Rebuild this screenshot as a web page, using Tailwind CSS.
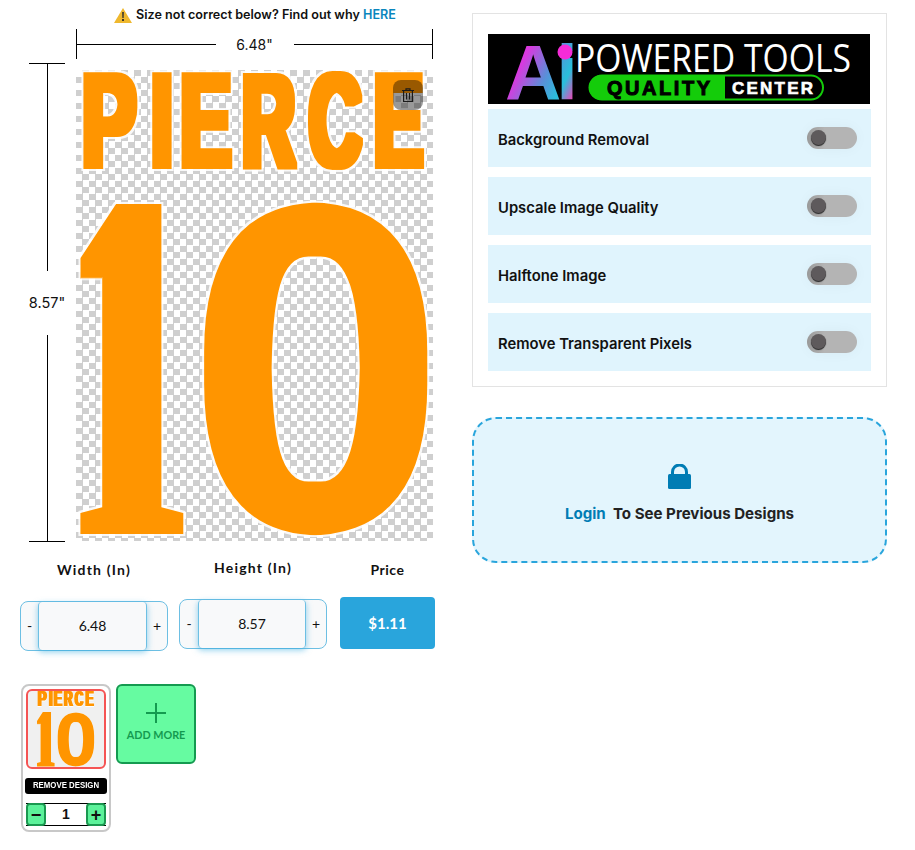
<!DOCTYPE html>
<html lang="en">
<head>
<meta charset="utf-8">
<title>Design sizing</title>
<script src="https://cdn.jsdelivr.net/npm/@tailwindcss/browser@4"></script>
</head>
<body class="bg-white font-['Inter',sans-serif] text-[#111]">
<svg width="0" height="0" class="absolute">
  <defs>
    <filter id="thick" x="-5%" y="-5%" width="110%" height="110%" color-interpolation-filters="sRGB">
      <feMorphology in="SourceAlpha" operator="dilate" radius="4 3" result="core"/>
      <feMorphology in="SourceAlpha" operator="dilate" radius="5.5 4.5" result="halo"/>
      <feFlood flood-color="#ffffff" flood-opacity="0.85"/><feComposite in2="halo" operator="in" result="w"/>
      <feFlood flood-color="#ff9500"/><feComposite in2="core" operator="in" result="o"/>
      <feMerge><feMergeNode in="w"/><feMergeNode in="o"/></feMerge>
    </filter>
    <filter id="one" x="-30%" y="-5%" width="160%" height="110%" color-interpolation-filters="sRGB">
      <feMorphology in="SourceAlpha" operator="dilate" radius="16 0" result="core"/>
      <feMorphology in="SourceAlpha" operator="dilate" radius="17.5 1.5" result="halo"/>
      <feFlood flood-color="#ffffff" flood-opacity="0.85"/><feComposite in2="halo" operator="in" result="w"/>
      <feFlood flood-color="#ff9500"/><feComposite in2="core" operator="in" result="o"/>
      <feMerge><feMergeNode in="w"/><feMergeNode in="o"/></feMerge>
    </filter>
    <filter id="zero" x="-5%" y="-10%" width="110%" height="120%" color-interpolation-filters="sRGB">
      <feMorphology in="SourceAlpha" operator="erode" radius="6 0" result="thin"/>
      <feMorphology in="thin" operator="dilate" radius="0 16" result="core"/>
      <feMorphology in="thin" operator="dilate" radius="1.5 17.5" result="halo"/>
      <feFlood flood-color="#ffffff" flood-opacity="0.85"/><feComposite in2="halo" operator="in" result="w"/>
      <feFlood flood-color="#ff9500"/><feComposite in2="core" operator="in" result="o"/>
      <feMerge><feMergeNode in="w"/><feMergeNode in="o"/></feMerge>
    </filter>
    <g id="art">
      <g filter="url(#thick)" font-family="Liberation Sans" font-weight="700" font-size="131" fill="#ff9500">
        <text transform="translate(6 96) scale(.62 1)">P</text>
        <text transform="translate(75 96) scale(.6 1)">I</text>
        <text transform="translate(104.5 96) scale(.58 1)">E</text>
        <text transform="translate(166 96) scale(.56 1)">R</text>
        <text transform="translate(233 96) scale(.55 1)">C</text>
        <text transform="translate(298 96) scale(.56 1)">E</text>
      </g>
      <g filter="url(#one)" font-family="Liberation Serif" font-weight="700" fill="#ff9500">
        <text transform="translate(5 464) scale(.385 1)" font-size="500">1</text>
      </g>
      <g filter="url(#zero)" font-family="Liberation Serif" font-weight="700" fill="#ff9500">
        <text transform="translate(101 445) scale(1.244 1)" font-size="446">0</text>
      </g>
    </g>
  </defs>
</svg>

<main class="flex items-start">
  <!-- left column -->
  <section class="w-[472px] shrink-0">
    <p class="h-[29px] pl-[114px] flex items-center gap-1 pt-px text-[12.6px] font-semibold whitespace-nowrap">
      <svg width="18" height="15" viewBox="0 0 18 15"><path d="M9 0 18 15H0Z" fill="#efb82e"/><path d="M8.2 4h1.6l-.2 6H8.4Z M8.1 11h1.8v2H8.1Z" fill="#2a2a2a"/></svg>
      <span>Size not correct below? Find out why <a class="text-[#0a86bd]">HERE</a></span>
    </p>
    <div class="ml-[76px] w-[357px] h-[30px] border-x border-black flex items-center pt-px">
      <span class="flex-1 h-px bg-black"></span>
      <span class="w-[78px] text-center text-[14px]">6.48"</span>
      <span class="flex-1 h-px bg-black"></span>
    </div>
    <div class="flex mt-[4px] h-[479px]">
      <div class="ml-[28px] w-[38px] h-[479px] flex flex-col items-center">
        <span class="w-[36px] h-px bg-black shrink-0"></span>
        <span class="w-px flex-1 bg-black"></span>
        <span class="h-[64px] flex items-center text-[14.5px] whitespace-nowrap">8.57"</span>
        <span class="w-px flex-1 bg-black"></span>
        <span class="w-[36px] h-px bg-black shrink-0"></span>
      </div>
      <div class="relative ml-[10px] mt-[7px] w-[357px] h-[471px] bg-[repeating-conic-gradient(#cfcfcf_0_25%,#ffffff_0_50%)] bg-[length:13px_13px]">
        <svg width="357" height="471" viewBox="0 0 357 471" class="block"><use href="#art"/></svg>
        <button class="absolute left-[317px] top-[10px] w-[30px] h-[30px] rounded-lg bg-black/40 flex items-center justify-center">
          <svg width="12" height="14" viewBox="0 0 12 14" fill="none" stroke="#1a1a1a" stroke-width="1.2"><path d="M0 2.5h12M4 2.5V.8h4v1.7M1.6 2.5v11h8.8v-11M4.5 5v6.5M7.5 5v6.5"/></svg>
        </button>
      </div>
    </div>
    <!-- size controls -->
    <div class="flex items-start mt-[15px] pl-[20px] font-['Lato',sans-serif]">
      <div class="w-[148px] mr-[11px]">
        <p class="h-[28px] text-center text-[14px] font-bold tracking-[1.2px] pt-[2px]">Width (In)</p>
        <div class="mt-[16px] h-[50px] flex rounded-lg border border-[#6dbfe3] bg-[#f8f9fa] text-[14px] pb-[2px]">
          <span class="w-[17px] flex items-center justify-center">-</span>
          <span class="flex-1 flex items-center justify-center -mb-[2px] pb-[2px] border-x border-[#6dbfe3] rounded-sm shadow-[0_2px_6px_rgba(41,165,220,.55)]">6.48</span>
          <span class="w-[20px] flex items-center justify-center">+</span>
        </div>
      </div>
      <div class="w-[148px] mr-[13px]">
        <p class="h-[26px] text-center text-[14px] font-bold tracking-[1.2px]">Height (In)</p>
        <div class="mt-[16px] h-[50px] flex rounded-lg border border-[#6dbfe3] bg-[#f8f9fa] text-[14px] pb-[2px]">
          <span class="w-[18px] flex items-center justify-center">-</span>
          <span class="flex-1 flex items-center justify-center -mb-[2px] pb-[2px] border-x border-[#6dbfe3] rounded-sm shadow-[0_2px_6px_rgba(41,165,220,.55)]">8.57</span>
          <span class="w-[20px] flex items-center justify-center">+</span>
        </div>
      </div>
      <div class="w-[95px]">
        <p class="h-[28px] text-center text-[14px] font-bold tracking-[.5px] pt-[2px]">Price</p>
        <div class="mt-[12px] h-[52px] rounded bg-[#29a5dc] text-white font-bold text-[15px] flex items-center justify-center">$1.11</div>
      </div>
    </div>
    <!-- thumbnails -->
    <div class="flex items-start gap-[5px] mt-[33px] ml-[21px]">
      <div class="w-[90px] h-[148px] rounded-lg border-2 border-[#c8c8c8] pt-[3px] flex flex-col items-center">
        <div class="w-[80px] h-[80px] rounded-md border-2 border-[#f55454] bg-[#f0f0f0] overflow-hidden">
          <svg width="76" height="76" viewBox="-51 3 460 465" class="block"><use href="#art"/></svg>
        </div>
        <div class="mt-[9px] w-[82px] h-[16px] rounded-[3px] bg-black text-white text-[9px] font-bold flex items-center justify-center font-['Liberation_Sans',sans-serif] whitespace-nowrap"><span class="scale-x-[.87]">REMOVE DESIGN</span></div>
        <div class="mt-[9px] w-[80px] h-[23px] flex items-center border-y border-black font-['Liberation_Sans',sans-serif]">
          <span class="w-[20px] h-[23px] -my-px rounded bg-[#5cf29a] border-2 border-[#1a9850] flex items-center justify-center font-bold text-[18px] leading-none">−</span>
          <span class="flex-1 text-center font-bold text-[14px]">1</span>
          <span class="w-[20px] h-[23px] -my-px rounded bg-[#5cf29a] border-2 border-[#1a9850] flex items-center justify-center font-bold text-[18px] leading-none">+</span>
        </div>
      </div>
      <button class="w-[80px] h-[80px] rounded-md border-2 border-[#149a50] bg-[#66fba1] text-[#149a50] flex flex-col items-center font-['Lato',sans-serif]">
        <svg width="20" height="20" viewBox="0 0 20 20" class="mt-[17px]" stroke="#149a50" stroke-width="2"><path d="M10 0v20M0 10h20"/></svg>
        <span class="mt-[4px] text-[10.8px] font-bold whitespace-nowrap">ADD MORE</span>
      </button>
    </div>
  </section>

  <!-- right column -->
  <section class="w-[415px] shrink-0 pt-[13px]">
    <div class="h-[374px] border border-[#e3e3e3] pt-[20px] pl-[15px] pr-[15px]">
      <svg width="382" height="70" viewBox="0 0 382 70" class="block bg-black">
        <defs>
          <linearGradient id="aig" x1="0" y1=".1" x2="1" y2=".7">
            <stop offset="0" stop-color="#f52bd8"/><stop offset=".3" stop-color="#d83adf"/><stop offset=".6" stop-color="#5a8fd8"/><stop offset=".82" stop-color="#28c0dc"/><stop offset="1" stop-color="#f83fb4"/>
          </linearGradient>
        </defs>
        <text x="17" y="66" font-family="Liberation Sans" font-weight="700" font-size="78" fill="url(#aig)">A<tspan dx="-5">i</tspan></text>
        <circle cx="77" cy="18" r="7.5" fill="#f52bd8"/>
        <text x="87" y="38" font-family="Open Sans" font-size="39" fill="#fff" textLength="276" lengthAdjust="spacingAndGlyphs">POWERED TOOLS</text>
        <rect x="102" y="41.5" width="233" height="24" rx="12" fill="#000" stroke="#14cc0a" stroke-width="2"/>
        <path d="M113 41h124v25H113a12.5 12.5 0 0 1 0-25Z" fill="#14cc0a"/>
        <text x="119" y="61" font-family="Liberation Sans" font-weight="700" font-size="20" fill="#000" stroke="#000" stroke-width="1" textLength="103" lengthAdjust="spacing">QUALITY</text>
        <text x="244" y="60" font-family="Liberation Sans" font-weight="700" font-size="17" fill="#fff" stroke="#fff" stroke-width=".6" textLength="81" lengthAdjust="spacing">CENTER</text>
      </svg>
      <ul class="mt-[5px] flex flex-col gap-[10px] w-[383px]">
        <li class="h-[58px] bg-[#e0f4fd] pl-[10px] pr-[14px] flex items-center justify-between text-[14.8px] font-semibold"><span class="pt-[4px]">Background Removal</span><span class="relative w-[50px] h-[22px] rounded-full bg-[linear-gradient(90deg,#999,#b4b4b4_35%)] shadow-[0_0_14px_rgba(0,0,0,.04)]"><span class="absolute left-[4px] top-[3px] w-[15px] h-[15px] rounded-full bg-[#5e5a5c] shadow-[0_1px_1px_#222]"></span></span></li>
        <li class="h-[58px] bg-[#e0f4fd] pl-[10px] pr-[14px] flex items-center justify-between text-[14.8px] font-semibold"><span class="pt-[4px]">Upscale Image Quality</span><span class="relative w-[50px] h-[22px] rounded-full bg-[linear-gradient(90deg,#999,#b4b4b4_35%)] shadow-[0_0_14px_rgba(0,0,0,.04)]"><span class="absolute left-[4px] top-[3px] w-[15px] h-[15px] rounded-full bg-[#5e5a5c] shadow-[0_1px_1px_#222]"></span></span></li>
        <li class="h-[58px] bg-[#e0f4fd] pl-[10px] pr-[14px] flex items-center justify-between text-[14.8px] font-semibold"><span class="pt-[4px]">Halftone Image</span><span class="relative w-[50px] h-[22px] rounded-full bg-[linear-gradient(90deg,#999,#b4b4b4_35%)] shadow-[0_0_14px_rgba(0,0,0,.04)]"><span class="absolute left-[4px] top-[3px] w-[15px] h-[15px] rounded-full bg-[#5e5a5c] shadow-[0_1px_1px_#222]"></span></span></li>
        <li class="h-[58px] bg-[#e0f4fd] pl-[10px] pr-[14px] flex items-center justify-between text-[14.8px] font-semibold"><span class="pt-[4px]">Remove Transparent Pixels</span><span class="relative w-[50px] h-[22px] rounded-full bg-[linear-gradient(90deg,#999,#b4b4b4_35%)] shadow-[0_0_14px_rgba(0,0,0,.04)]"><span class="absolute left-[4px] top-[3px] w-[15px] h-[15px] rounded-full bg-[#5e5a5c] shadow-[0_1px_1px_#222]"></span></span></li>
      </ul>
    </div>
    <div class="mt-[30px] h-[146px] rounded-3xl border-2 border-dashed border-[#29a5dc] bg-[#e3f5fd] flex flex-col items-center pt-[45px]">
      <svg width="23" height="25" viewBox="0 0 23 25"><path d="M4.5 11V8a7 7 0 0 1 14 0v3" fill="none" stroke="#007cb4" stroke-width="3"/><rect y="10" width="23" height="15" rx="1.5" fill="#007cb4"/></svg>
      <p class="mt-[14px] text-[15.1px] font-bold text-[#222]"><a class="text-[#007cb4]">Login</a>&nbsp; To See Previous Designs</p>
    </div>
  </section>
</main>
</body>
</html>
